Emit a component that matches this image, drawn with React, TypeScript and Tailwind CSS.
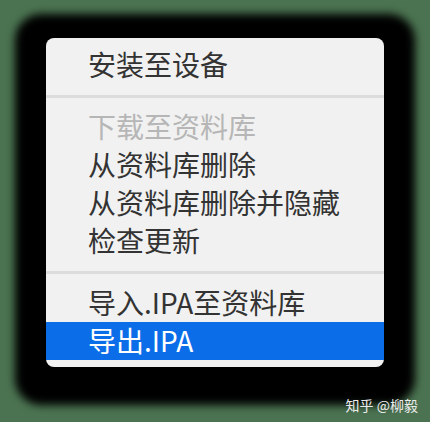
import React from "react";

type Row = { label: string; disabled?: boolean; active?: boolean } | "sep";

const rows: Row[] = [
  { label: "安装至设备" },
  "sep",
  { label: "下载至资料库", disabled: true },
  { label: "从资料库删除" },
  { label: "从资料库删除并隐藏" },
  { label: "检查更新" },
  "sep",
  { label: "导入.IPA至资料库" },
  { label: "导出.IPA", active: true },
];

const cjk = { fontFamily: '"Noto Sans CJK SC", "Noto Sans", sans-serif' };

export default function App() {
  return (
    <div className="relative w-[430px] h-[422px] bg-[#4b7351] overflow-hidden pl-[46px] pt-[38px]" style={cjk}>
      <div className="w-[338px] rounded-[8px] bg-[#f1f1f1] pt-[8px] pb-[7px] shadow-[0_7px_9px_31px_#000]">
        {rows.map((r, i) =>
          r === "sep" ? (
            <div key={i} className="h-[24px] flex items-center">
              <div className="w-full h-[3px] bg-[#dcdcdc]" />
            </div>
          ) : (
            <div
              key={i}
              className={
                "h-[38px] flex items-center pl-[42px] pb-[3px] text-[28px] font-normal leading-none whitespace-nowrap " +
                (r.active
                  ? "bg-[#0b6de8] text-white"
                  : r.disabled
                  ? "text-[#b6b6b6]"
                  : "text-[#333333]")
              }
            >
              {r.label}
            </div>
          )
        )}
      </div>
      <div className="absolute right-[12px] bottom-[10px] text-[14px] leading-none text-[#ececec]">
        知乎 @柳毅
      </div>
    </div>
  );
}
